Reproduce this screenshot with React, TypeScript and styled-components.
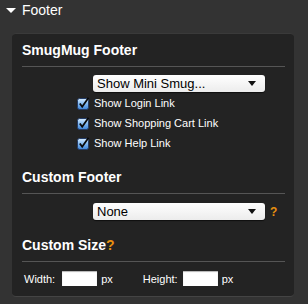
import React from 'react';
import styled, { createGlobalStyle } from 'styled-components';

const Global = createGlobalStyle`
  body {
    margin: 0;
    background: #333333;
    font-family: "Liberation Sans", Arial, sans-serif;
  }
`;

const Page = styled.div`
  width: 308px;
  height: 304px;
  background: #333333;
  overflow: hidden;
`;

const Header = styled.div`
  display: flex;
  align-items: center;
  height: 20px;
  padding: 0 0 0 6px;
  color: #fff;
  font-size: 14px;
`;

const Caret = styled.span`
  width: 0;
  height: 0;
  border-left: 5px solid transparent;
  border-right: 5px solid transparent;
  border-top: 5px solid #fff;
  margin-right: 6px;
  margin-top: 1px;
`;

const Panel = styled.div`
  margin: 13px 0 0 12px;
  width: 282px;
  height: 264px;
  box-sizing: border-box;
  background: #232323;
  border-top: 1px solid #3a3a3a;
  border-bottom: 1px solid #444;
  border-radius: 4px;
  padding: 8px 9px 0 10px;
  display: flex;
  flex-direction: column;
`;

const SectionTitle = styled.div<{ $gap?: number }>`
  color: #fff;
  font-size: 14px;
  font-weight: bold;
  line-height: 17px;
  padding-bottom: 7px;
  border-bottom: 1px solid #555;
  margin-top: ${p => p.$gap ?? 0}px;
`;

const Help = styled.span`
  color: #e8900f;
  font-weight: bold;
`;

const SelectRow = styled.div<{ $gap?: number }>`
  display: flex;
  align-items: center;
  margin: ${p => p.$gap ?? 8}px 0 0 71px;
`;

const Select = styled.div`
  width: 172px;
  height: 17px;
  box-sizing: border-box;
  background: linear-gradient(#ffffff, #ececec);
  border-radius: 3px;
  box-shadow: 0 1px 1px rgba(0, 0, 0, 0.6);
  display: flex;
  align-items: center;
  justify-content: space-between;
  padding: 0 9px 0 4px;
  color: #000;
  font-size: 13px;
`;

const Arrow = styled.span`
  width: 0;
  height: 0;
  border-left: 4px solid transparent;
  border-right: 4px solid transparent;
  border-top: 5px solid #111;
`;

const HelpAfter = styled(Help)`
  font-size: 12px;
  margin-left: 5px;
`;

const Checks = styled.div`
  display: flex;
  flex-direction: column;
  gap: 8px;
  margin: 5px 0 0 55px;
`;

const CheckRow = styled.label`
  display: flex;
  align-items: center;
  gap: 4px;
  color: #fff;
  font-size: 11px;
  height: 12px;
`;

const Fields = styled.div`
  display: flex;
  align-items: center;
  margin: 9px 0 0 2px;
  color: #fff;
  font-size: 11px;
`;

const Field = styled.span<{ $gap?: number }>`
  margin-left: ${p => p.$gap ?? 0}px;
`;

const Box = styled.div<{ $gap: number }>`
  width: 35px;
  height: 15px;
  background: #fff;
  box-shadow: inset 0 1px 1px rgba(0, 0, 0, 0.3);
  margin: 0 4px 0 ${p => p.$gap}px;
`;

function Check() {
  return (
    <svg width="13" height="13" viewBox="0 0 13 13">
      <defs>
        <linearGradient id="cb" x1="0" y1="0" x2="0" y2="1">
          <stop offset="0" stopColor="#d7ecff" />
          <stop offset="0.5" stopColor="#7fb7f0" />
          <stop offset="1" stopColor="#3c83d8" />
        </linearGradient>
      </defs>
      <rect x="0.5" y="1.5" width="11" height="11" rx="2" fill="url(#cb)" stroke="#243c66" />
      <path d="M2.8 6.5 L5.2 9.8 L11.5 0.8" fill="none" stroke="#0a0a0a" strokeWidth="1.8" />
    </svg>
  );
}

export default function App() {
  return (
    <Page>
      <Global />
      <Header>
        <Caret />
        Footer
      </Header>
      <Panel>
        <SectionTitle>SmugMug Footer</SectionTitle>
        <SelectRow>
          <Select>
            Show Mini Smug...
            <Arrow />
          </Select>
        </SelectRow>
        <Checks>
          {['Show Login Link', 'Show Shopping Cart Link', 'Show Help Link'].map(t => (
            <CheckRow key={t}>
              <Check />
              {t}
            </CheckRow>
          ))}
        </Checks>
        <SectionTitle $gap={20}>Custom Footer</SectionTitle>
        <SelectRow $gap={9}>
          <Select>
            None
            <Arrow />
          </Select>
          <HelpAfter>?</HelpAfter>
        </SelectRow>
        <SectionTitle $gap={17}>
          Custom Size<Help>?</Help>
        </SectionTitle>
        <Fields>
          <Field>Width:</Field>
          <Box $gap={7} />
          <Field>px</Field>
          <Field $gap={30}>Height:</Field>
          <Box $gap={5} />
          <Field>px</Field>
        </Fields>
      </Panel>
    </Page>
  );
}
